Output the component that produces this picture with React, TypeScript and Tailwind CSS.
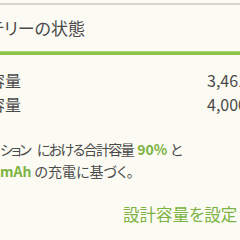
import React from "react"

const font = "font-['Noto_Sans_CJK_JP','Noto_Sans',sans-serif] [font-feature-settings:'palt']"

function Row({ label, value }: { label: string; value: string }) {
  return (
    <div className="flex h-[24px] items-center text-[16px] text-[#4a4a4a] whitespace-nowrap">
      <div className="w-[21px] shrink-0 flex justify-end">{label}</div>
      <div className="ml-[186px] shrink-0">{value}</div>
    </div>
  )
}

export default function App() {
  return (
    <div className={`w-[240px] h-[240px] overflow-hidden bg-[#fbfbf3] ${font}`}>
      <div className="pt-[3px]">
        <div className="h-[2px] bg-[#d6d6ce]" />
      </div>

      <div className="h-[46px] flex items-center text-[17px] text-[#4a4a4a] whitespace-nowrap">
        <div className="w-[85px] shrink-0 flex justify-end">バッテリーの状態</div>
      </div>

      <div className="h-[4px] bg-[#8bc34a] border-t border-[#a9d470]" />

      <div className="mt-[13px]">
        <Row label="推定容量" value="3,461 mAh" />
        <Row label="設計容量" value="4,000 mAh" />
      </div>

      <div className="mt-[22px] text-[14px] leading-[22px] text-[#4a4a4a] whitespace-nowrap">
        <div className="flex">
          <div className="w-0 shrink-0 flex justify-end">12 セッ</div>
          <div className="flex items-baseline">
            <span className="tracking-[-2px]">ション</span>
            <span className="ml-[7px] tracking-[-1.6px]">における合計容量</span>
            <span className="ml-[4px] font-bold text-[#7cb342]">90%</span>
            <span className="ml-[3px]">と</span>
          </div>
        </div>
        <div className="flex">
          <div className="w-0 shrink-0 flex justify-end font-bold text-[#7cb342]">3,600&nbsp;</div>
          <div>
            <span className="font-bold text-[#7cb342]">mAh</span> の充電に基づく。
          </div>
        </div>
      </div>

      <div className="mt-[12px] h-[40px] flex items-center whitespace-nowrap">
        <button className="ml-[123px] text-[16.5px] text-[#7cb342]">設計容量を設定</button>
      </div>
    </div>
  )
}
